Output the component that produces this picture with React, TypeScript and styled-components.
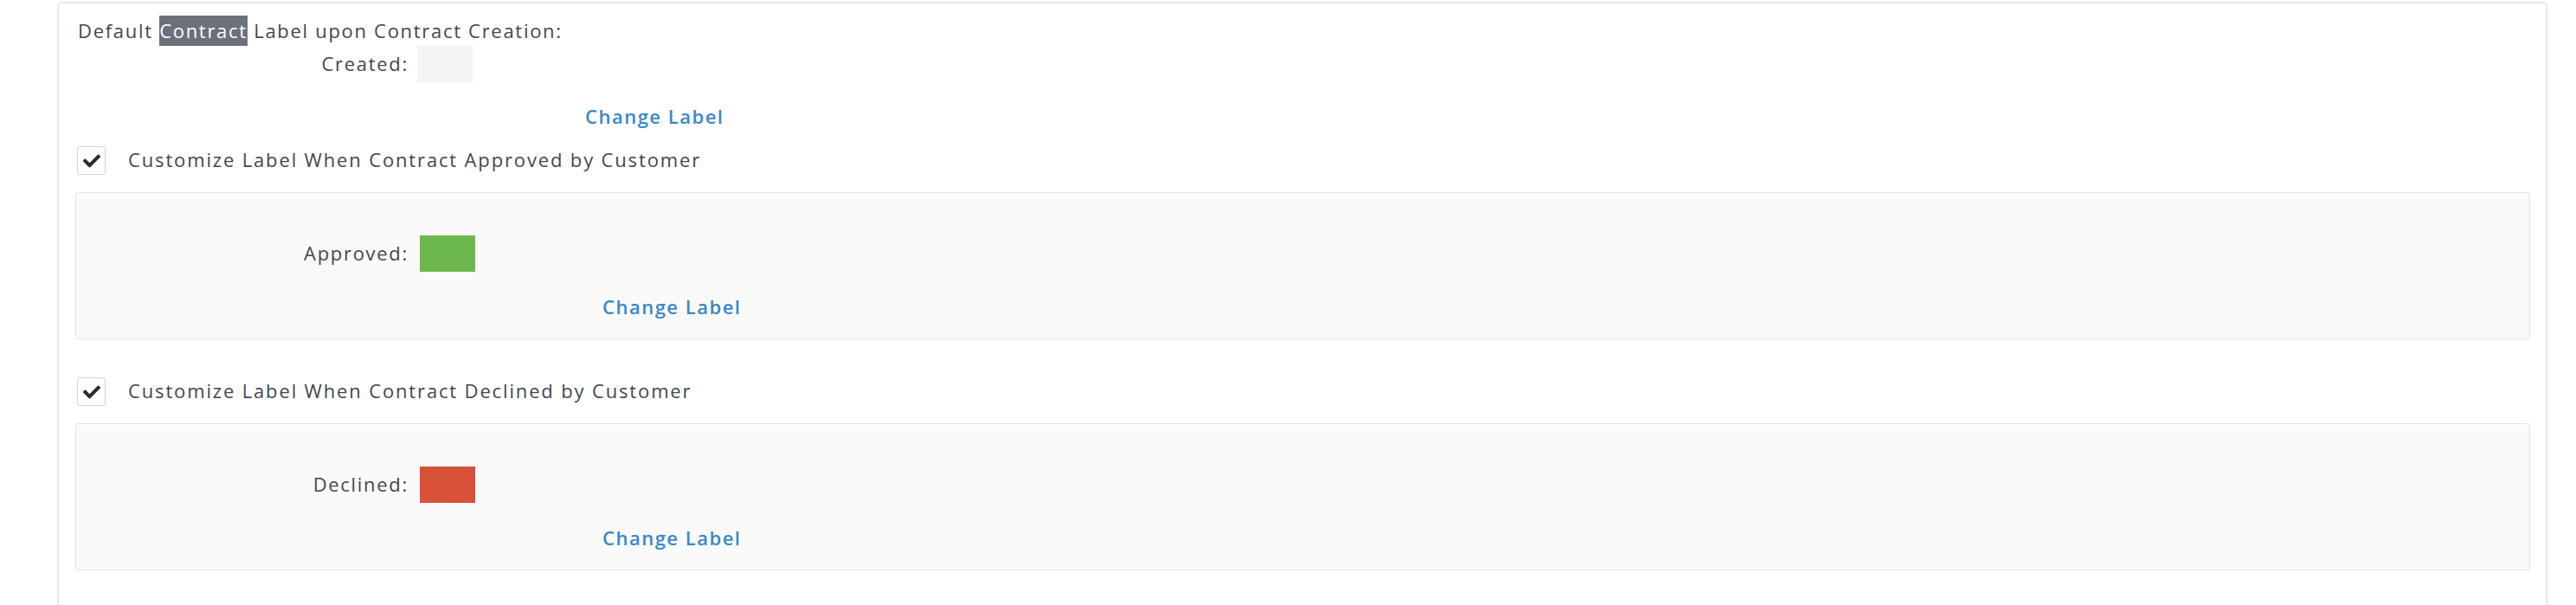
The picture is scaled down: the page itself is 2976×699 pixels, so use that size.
import React from 'react';
import styled, { createGlobalStyle } from 'styled-components';
import { FaCheck } from 'react-icons/fa';

const GlobalStyle = createGlobalStyle`
  html, body {
    margin: 0;
    padding: 0;
    background: #ffffff;
  }
  body {
    font-family: 'Open Sans', 'Liberation Sans', sans-serif;
    color: #42474f;
    letter-spacing: 1.7px;
  }
`;

const Panel = styled.div`
  margin: 2px 33px 0 66px;
  border: 2px solid #e8e8e8;
  border-bottom: none;
  border-radius: 5px 5px 0 0;
  padding: 16px 18px 40px 19px;
  display: flex;
  flex-direction: column;
`;

const Heading = styled.div`
  font-size: 22px;
  line-height: 30px;
  padding-left: 3px;
`;

const Highlight = styled.span`
  background: #6b717b;
  color: #ffffff;
  padding: 2px 0 3px;
`;

const FieldRow = styled.div<{ $labelWidth: number; $gap: number; $top: number }>`
  display: grid;
  grid-template-columns: ${p => p.$labelWidth}px 64px;
  column-gap: ${p => p.$gap}px;
  align-items: center;
  margin-top: ${p => p.$top}px;
`;

const FieldLabel = styled.span`
  font-size: 22px;
  line-height: 30px;
  text-align: right;
  margin-top: -3px;
`;

const Swatch = styled.div<{ $color: string }>`
  width: 64px;
  height: 42px;
  background: ${p => p.$color};
`;

const LinkButton = styled.a<{ $offset: number; $top: number }>`
  display: block;
  margin: ${p => p.$top}px 0 0 ${p => p.$offset}px;
  font-size: 22px;
  line-height: 30px;
  font-weight: 600;
  letter-spacing: 1.5px;
  color: #3a87c8;
  text-decoration: none;
  cursor: pointer;
`;

const CheckRow = styled.label<{ $top: number }>`
  display: flex;
  align-items: center;
  gap: 26px;
  margin: ${p => p.$top}px 0 0 2px;
  font-size: 22px;
  letter-spacing: 1.85px;
  cursor: pointer;
`;

const CheckText = styled.span`
  margin-top: -4px;
`;

const CheckBox = styled.span`
  width: 31px;
  height: 31px;
  flex: none;
  border: 1px solid #d3d3d3;
  border-radius: 3px;
  background: #fff;
  display: flex;
  align-items: center;
  justify-content: center;
  color: #2b2b2b;
  font-size: 20px;
`;

const SubBox = styled.div`
  margin-top: 20px;
  background: #fafafa;
  border: 1px solid #e3e3e3;
  border-radius: 3px;
  padding: 49px 0 22px 0;
`;

interface LabelBlockProps {
  name: string;
  color: string;
}

const LabelBlock: React.FC<LabelBlockProps> = ({ name, color }) => (
  <SubBox>
    <FieldRow $labelWidth={384} $gap={13} $top={0}>
      <FieldLabel>{name}:</FieldLabel>
      <Swatch $color={color} />
    </FieldRow>
    <LinkButton $offset={608} $top={25}>Change Label</LinkButton>
  </SubBox>
);

const App: React.FC = () => (
  <>
    <GlobalStyle />
    <Panel>
      <Heading>
        Default <Highlight>Contract</Highlight> Label upon Contract Creation:
      </Heading>
      <FieldRow $labelWidth={385} $gap={10} $top={3}>
        <FieldLabel>Created:</FieldLabel>
        <Swatch $color="#f4f4f4" />
      </FieldRow>
      <LinkButton $offset={589} $top={24}>Change Label</LinkButton>

      <CheckRow $top={20}>
        <CheckBox><FaCheck /></CheckBox>
        <CheckText>Customize Label When Contract Approved by Customer</CheckText>
      </CheckRow>
      <LabelBlock name="Approved" color="#6db84e" />

      <CheckRow $top={44}>
        <CheckBox><FaCheck /></CheckBox>
        <CheckText>Customize Label When Contract Declined by Customer</CheckText>
      </CheckRow>
      <LabelBlock name="Declined" color="#d65136" />
    </Panel>
  </>
);

export default App;
